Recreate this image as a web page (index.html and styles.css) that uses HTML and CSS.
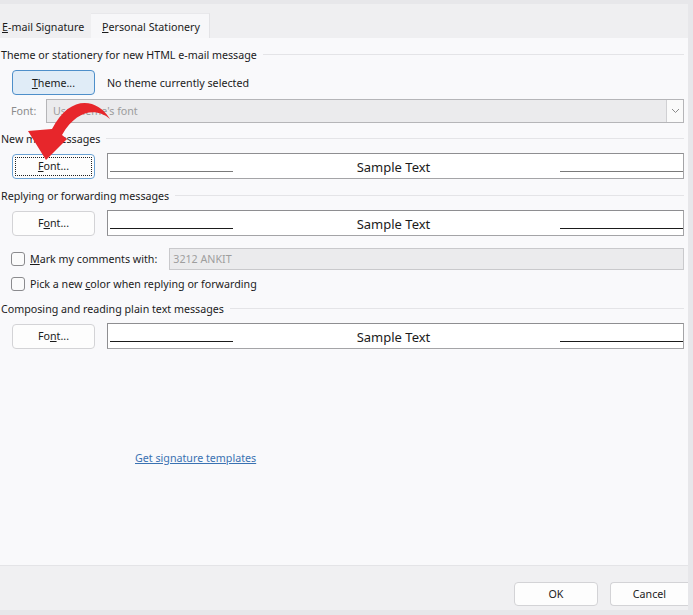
FILE: index.html
```html
<!DOCTYPE html>
<html>
<head>
<meta charset="utf-8">
<link rel="stylesheet" href="styles.css">
</head>
<body>
<div class="window">
  <div class="tabs">
    <div class="tab"><u>E</u>-mail Signature</div>
    <div class="tab active"><u>P</u>ersonal Stationery</div>
  </div>
  <div class="content">
    <div class="heading h1"><span>Theme or stationery for new HTML e-mail message</span><i class="rule"></i></div>
    <div class="row theme-row">
      <button class="btn theme"><u>T</u>heme...</button>
      <span class="note">No theme currently selected</span>
    </div>
    <div class="row font-row">
      <span class="label">Font:</span>
      <div class="combo">
        <span class="combo-text">Use theme's font</span>
        <span class="combo-btn"><svg width="9" height="6" viewBox="0 0 9 6"><path d="M1 1 L4.5 4.5 L8 1" fill="none" stroke="#8a8a8a" stroke-width="1"/></svg></span>
      </div>
    </div>
    <div class="heading h2"><span>New mail messages</span><i class="rule"></i></div>
    <div class="row sample-row">
      <button class="btn focused"><span class="focus-ring"><u>F</u>ont...</span></button>
      <div class="sample"><i class="ul ul-gray"></i><span>Sample Text</span><i class="ul ul-gray"></i></div>
    </div>
    <div class="heading h3"><span>Replying or forwarding messages</span><i class="rule"></i></div>
    <div class="row sample-row">
      <button class="btn">F<u>o</u>nt...</button>
      <div class="sample"><i class="ul"></i><span>Sample Text</span><i class="ul"></i></div>
    </div>
    <div class="row check-row1">
      <span class="check"></span>
      <span class="check-label"><u>M</u>ark my comments with:</span>
      <div class="mark-input">3212 ANKIT</div>
    </div>
    <div class="row check-row2">
      <span class="check"></span>
      <span class="check-label">Pick a new <u>c</u>olor when replying or forwarding</span>
    </div>
    <div class="heading h4"><span>Composing and reading plain text messages</span><i class="rule"></i></div>
    <div class="row sample-row">
      <button class="btn">Fo<u>n</u>t...</button>
      <div class="sample"><i class="ul"></i><span>Sample Text</span><i class="ul"></i></div>
    </div>
    <div class="link-row"><a class="link" href="#">Get signature templates</a></div>
  </div>
  <div class="footer">
    <button class="btn ok">OK</button>
    <button class="btn cancel">Cancel</button>
  </div>
  <svg class="arrow" width="120" height="170" viewBox="0 0 120 170">
    <path d="M110,119 C97,98 70,94 52,129 L28,131 L46,160 L67,139 L62,135 C77,109 97,108 110,119 Z" fill="#e7262b"/>
  </svg>
</div>
</body>
</html>
```

FILE: styles.css
```css
* { box-sizing: border-box; }
html, body { margin: 0; padding: 0; }
body {
  background: #e7e7ea;
  font-family: "Noto Sans", "Open Sans", sans-serif;
  font-size: 10.7px;
  color: #1b1b1b;
  width: 693px;
  height: 615px;
  overflow: hidden;
}
.window {
  position: relative;
  width: 688px;
  height: 610px;
  display: flex;
  flex-direction: column;
  background: #f9f9fb;
}
.tabs {
  height: 38px;
  background: #efeff1;
  border-top: 4px solid #e7e7ea;
  display: flex;
  align-items: flex-end;
}
.tab {
  height: 25px;
  padding: 6px 0 0 2px;
  line-height: 16px;
  width: 91px;
}
.tab.active {
  width: 119px;
  background: #f7f7f9;
  padding-left: 11px;
  border-top: 1px solid #e8e8eb;
  border-right: 1px solid #e3e3e6;
  padding-top: 5px;
}
.content {
  flex: 1;
  padding: 9px 4px 0 1px;
  display: flex;
  flex-direction: column;
}
.heading {
  display: flex;
  align-items: center;
  height: 16px;
  line-height: 16px;
  gap: 6px;
}
.rule { flex: 1; height: 1px; background: #e4e4e7; margin-top: -1px; }
.h2 { margin-top: 8px; }
.h3 { margin-top: 9px; }
.h4 { margin-top: 9px; }
.row { display: flex; align-items: center; }
.theme-row { margin-top: 7px; height: 25px; padding-left: 11px; }
.font-row { margin-top: 4px; height: 24px; padding-left: 10px; }
.sample-row { margin-top: 6px; height: 26px; padding-left: 11px; }
.check-row1 { margin-top: 12px; height: 22px; padding-left: 10px; }
.check-row2 { margin-top: 6px; height: 16px; padding-left: 10px; }
.btn {
  font-family: inherit;
  font-size: 10.7px;
  color: #1b1b1b;
  width: 83px;
  height: 25px;
  background: #fdfdfd;
  border: 1px solid #d3d3d6;
  border-radius: 4px;
  padding: 0;
  display: flex;
  align-items: center;
  justify-content: center;
}
.btn.theme { background: #e0ecf7; border-color: #4e8fca; }
.btn.focused { border-color: #6aa1d3; padding: 2px; }
.focus-ring {
  display: flex;
  align-items: center;
  justify-content: center;
  width: 100%;
  height: 100%;
  border: 1px dotted #222;
}
.sample-row .btn { flex: none; }
.note { margin-left: 12px; }
.label { color: #8c8c8c; width: 35px; }
.combo {
  flex: 1;
  height: 24px;
  background: #ebebed;
  border: 1px solid #b5b5b8;
  display: flex;
  align-items: center;
  padding-left: 6px;
}
.combo-text { flex: 1; color: #9c9c9c; }
.combo-btn {
  width: 17px;
  height: 22px;
  background: #fafafa;
  border-left: 1px solid #d0d0d3;
  display: flex;
  align-items: center;
  justify-content: center;
}
.sample {
  flex: 1;
  margin-left: 12px;
  height: 26px;
  background: #fff;
  border: 1px solid #8e8e91;
  border-right-color: #a4a4a7;
  border-bottom-color: #a4a4a7;
  display: flex;
  align-items: flex-end;
  justify-content: space-between;
  padding: 0 0 6px 2px;
}
.sample span { font-size: 13px; line-height: 16px; align-self: center; margin-top: 7px; margin-right: 6px; }
.ul { width: 123px; height: 1px; background: #1b1b1b; }
.ul-gray { background: #7a7a7a; }
.check {
  width: 14px;
  height: 14px;
  border: 1px solid #8b8b8e;
  border-radius: 3px;
  background: #fbfbfb;
  flex: none;
}
.check-label { margin-left: 5px; }
.mark-input {
  margin-left: 12px;
  flex: 1;
  height: 22px;
  background: #ebebed;
  border: 1px solid #c9c9cc;
  color: #9e9e9e;
  line-height: 20px;
  padding-left: 3px;
}
.link-row { margin-top: 101px; padding-left: 134px; line-height: 16px; }
.link { color: #3a72b2; text-decoration: underline; }
.footer {
  height: 45px;
  background: #f0f0f2;
  border-top: 1px solid #e4e4e7;
  display: flex;
  justify-content: flex-end;
  padding-top: 16px;
  gap: 12px;
}
.footer .btn { height: 24px; }
.btn.ok { width: 84px; }
.btn.cancel { width: 78px; border-right: none; border-radius: 4px 0 0 4px; }
.arrow { position: absolute; left: 0; top: 0; pointer-events: none; }
```
